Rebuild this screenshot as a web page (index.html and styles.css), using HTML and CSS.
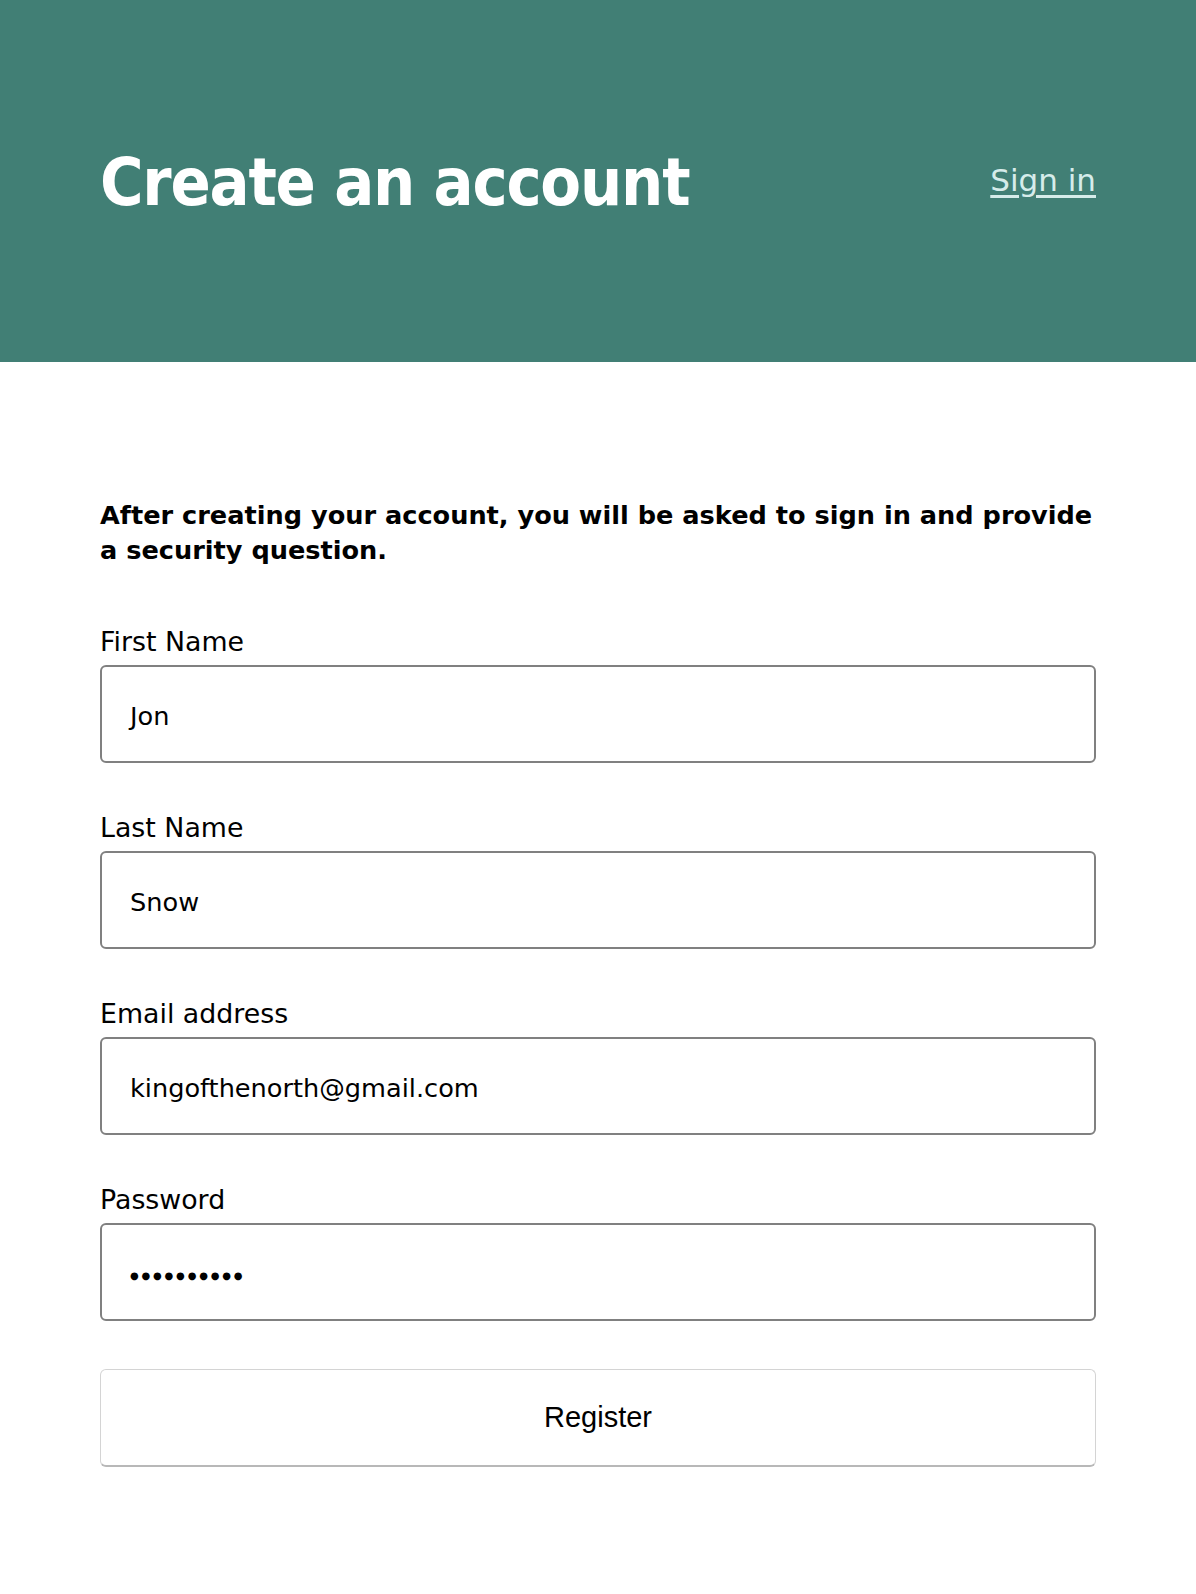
FILE: index.html
```html
<!DOCTYPE html>
<html>
<head>
<meta charset="utf-8">
<link rel="stylesheet" href="styles.css">
</head>
<body>
<header class="hero">
  <div class="hero-inner">
    <h1 class="title">Create an account</h1>
    <a class="signin" href="#">Sign in</a>
  </div>
</header>
<main class="content">
  <p class="intro">After creating your account, you will be asked to sign in and provide a security question.</p>
  <form class="form">
    <div class="field">
      <label class="label">First Name</label>
      <div class="input">Jon</div>
    </div>
    <div class="field">
      <label class="label">Last Name</label>
      <div class="input">Snow</div>
    </div>
    <div class="field">
      <label class="label">Email address</label>
      <div class="input">kingofthenorth@gmail.com</div>
    </div>
    <div class="field">
      <label class="label">Password</label>
      <div class="input pw">&#9679;&#9679;&#9679;&#9679;&#9679;&#9679;&#9679;&#9679;&#9679;&#9679;</div>
    </div>
    <div class="button">Register</div>
  </form>
</main>
</body>
</html>
```
FILE: styles.css
```css
html, body {
  margin: 0;
  padding: 0;
  background: #ffffff;
}
body {
  font-family: "DejaVu Sans", sans-serif;
  color: #000;
}
.hero {
  background: #417f75;
  height: 362px;
  box-sizing: border-box;
  padding: 0 100px;
}
.hero-inner {
  display: flex;
  justify-content: space-between;
  align-items: center;
  padding-top: 143px;
}
.title {
  margin: 0;
  color: #ffffff;
  font-family: "DejaVu Sans Condensed", "DejaVu Sans", sans-serif;
  font-stretch: condensed;
  font-weight: bold;
  font-size: 66px;
  line-height: 80px;
  letter-spacing: -1.2px;
}
.signin {
  color: #d6ecea;
  font-size: 31px;
  text-decoration: underline;
  text-underline-offset: 4px;
  margin-bottom: 6px;
}
.content {
  padding: 136px 100px 0;
}
.intro {
  margin: 0;
  font-weight: bold;
  font-size: 25.6px;
  line-height: 35px;
}
.form {
  display: flex;
  flex-direction: column;
  margin-top: 59px;
}
.field {
  display: flex;
  flex-direction: column;
  margin-bottom: 50px;
}
.label {
  font-size: 26.8px;
  line-height: 30px;
  margin-bottom: 8px;
}
.input {
  box-sizing: border-box;
  height: 98px;
  border: 2px solid #808080;
  border-radius: 6px;
  padding: 3px 28px 0;
  display: flex;
  align-items: center;
  font-size: 25.6px;
}
.pw {
  font-size: 10px;
  letter-spacing: 2.8px;
  padding-top: 6px;
}
.button {
  box-sizing: border-box;
  height: 98px;
  border: 1.5px solid #d4d4d4;
  border-bottom: 2px solid #b8b8b8;
  border-radius: 6px;
  display: flex;
  align-items: center;
  justify-content: center;
  font-family: "Liberation Sans", sans-serif;
  font-size: 29px;
  margin-top: -2px;
}
```
